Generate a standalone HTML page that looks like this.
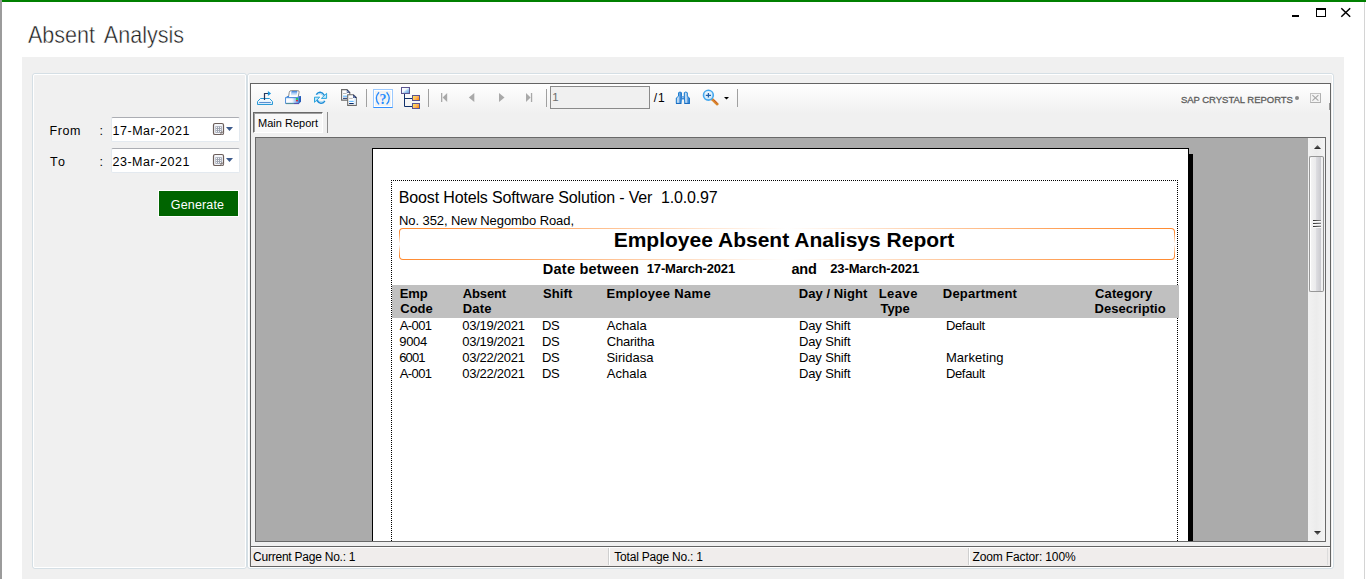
<!DOCTYPE html>
<html>
<head>
<meta charset="utf-8">
<title>Absent Analysis</title>
<style>
html,body{margin:0;padding:0;}
body{width:1366px;height:579px;overflow:hidden;background:#fff;position:relative;font-family:"Liberation Sans",sans-serif;color:#000;}
.a{position:absolute;}
.t{position:absolute;white-space:pre;line-height:1;}
/* window chrome */
#topbar{left:2px;top:0;width:1364px;height:2px;background:#008000;}
#leftbar{left:0;top:0;width:2px;height:579px;background:#9b9b9b;}
#rightline{left:1364px;top:2px;width:1px;height:577px;background:#d4d4d4;}
#title{left:28px;top:23px;font-size:24px;color:#1c1c1c;transform-origin:0 0;transform:scaleX(0.897);word-spacing:4.5px;-webkit-text-stroke:0.45px #fff;}
#main{left:22px;top:57px;width:1322px;height:522px;background:#f0f0f0;}
.gb{border:1px solid #d5dfe5;border-radius:3px;box-sizing:border-box;}
.gb:after{content:"";position:absolute;left:0;top:0;right:0;bottom:0;border:1px solid #fff;border-radius:2px;}
/* left panel */
.lbl{font-size:12.5px;color:#000;}
.inp{box-sizing:border-box;background:#fff;border:1px solid #e3e9ef;border-top-color:#abadb3;border-radius:2px;}
#gen{left:158px;top:190px;width:81px;height:27px;box-sizing:border-box;border:1px solid #fff;background:#006400;}
/* viewer */
#viewer{left:250px;top:83px;width:1081px;height:484px;box-sizing:border-box;border:1px solid #646464;background:#f0f0f0;}
#tbgrad{left:251px;top:84px;width:1079px;height:30px;background:linear-gradient(#fff,#fafafa 30%,#f0f0f0);}
.sep{width:1px;background:#a0a0a0;}
#tab{left:253px;top:112px;width:70px;height:21px;box-sizing:border-box;border:1px solid #fff;border-top-color:#696969;border-left-color:#696969;background:#f8f8f8;}
#tab:after{content:"";position:absolute;left:0;top:0;right:0;bottom:0;border-top:1px solid #a0a0a0;border-left:1px solid #a0a0a0;}
#rep{left:255px;top:137px;width:1071px;height:405px;box-sizing:border-box;border:1px solid #696969;background:#ababab;overflow:hidden;}
#page{left:116px;top:10px;width:817px;height:500px;box-sizing:border-box;border:1px solid #000;background:#fff;}
#shadow{left:933px;top:16px;width:4px;height:500px;background:#000;}
#sb{left:1308px;top:138px;width:17px;height:403px;background:linear-gradient(90deg,#f2f2f2,#ececec 50%,#f4f4f4);}
#thumb{left:1309px;top:156px;width:15px;height:136px;box-sizing:border-box;border:1px solid #979797;border-right-color:#8e8e8e;border-radius:2px;background:linear-gradient(90deg,#fff 0 1px,#f3f3f3 1px,#e9e9eb 6.5px,#dcdce0 6.5px,#c8c8cd 11.5px,#f0f0f0 11.5px);}
#status{left:251px;top:546px;width:1079px;height:20px;box-sizing:border-box;border-top:1px solid #646464;background:#f0edec;}
#status:after{content:"";position:absolute;left:0;top:0;right:0;height:1px;background:#fff;}
.st{font-size:12px;color:#000;}
#rc{left:-256px;top:-138px;width:1366px;height:579px;}
#obox{left:399px;top:228px;width:776px;height:32px;box-sizing:border-box;border:1px solid transparent;border-radius:4px;background:linear-gradient(#fff,#fff) padding-box,linear-gradient(90deg,#ff8a30,#ff9a4c 12%,#fff 50%,#ff9a4c 88%,#ff8a30) border-box;}
.oside{width:1px;height:24px;top:232px;background:linear-gradient(180deg,rgba(255,255,255,0),#fff 50%,rgba(255,255,255,0));}
/* report */
.r{font-size:12.5px;}
.h{font-size:13px;font-weight:bold;}
</style>
</head>
<body>
<div class="a" id="leftbar"></div>
<div class="a" id="topbar"></div>
<div class="a" id="rightline"></div>
<div class="t" id="title">Absent Analysis</div>

<!-- window controls -->
<div class="a" style="left:1292px;top:15px;width:7px;height:2px;background:#000;"></div>
<div class="a" style="left:1316px;top:8px;width:10px;height:9px;box-sizing:border-box;border:1px solid #000;border-top-width:2px;"></div>
<svg class="a" style="left:1340px;top:7px;" width="12" height="11" viewBox="0 0 12 11"><path d="M1.3 1.2 L10.2 9.8 M10.2 1.2 L1.3 9.8" stroke="#000" stroke-width="1.5" fill="none"/></svg>

<div class="a" id="main"></div>
<div class="a gb" style="left:32px;top:73px;width:215px;height:496px;"></div>
<div class="a gb" style="left:247px;top:73px;width:1087px;height:496px;"></div>

<!-- left panel -->
<div class="a inp" style="left:111px;top:117px;width:129px;height:25px;"></div>
<div class="a inp" style="left:111px;top:148px;width:129px;height:25px;"></div>
<div class="a" id="gen"></div>

<!-- viewer -->
<div class="a" id="viewer"></div>
<div class="a" id="tbgrad"></div>
<div class="a sep" style="left:366px;top:89px;height:18px;"></div>
<div class="a sep" style="left:428px;top:89px;height:18px;"></div>
<div class="a sep" style="left:546px;top:89px;height:18px;"></div>
<div class="a sep" style="left:737px;top:89px;height:18px;"></div>
<div class="a" style="left:550px;top:86px;width:100px;height:23px;box-sizing:border-box;border:1px solid #8a8a8a;background:#f0f0f0;"></div>

<div class="a" id="tab"></div>
<div class="a sep" style="left:327px;top:112px;height:21px;background:#8c8c8c;"></div>

<div class="a" id="rep">
  <div class="a" id="shadow"></div>
  <div class="a" id="page"></div>
  <div class="a" id="rc">
    <!-- dotted margins -->
    <div class="a" style="left:391px;top:180px;width:787px;height:1px;background:repeating-linear-gradient(90deg,#000 0 1px,transparent 1px 2px);"></div>
    <div class="a" style="left:391px;top:180px;width:1px;height:400px;background:repeating-linear-gradient(180deg,#000 0 1px,transparent 1px 2px);"></div>
    <div class="a" style="left:1177px;top:180px;width:1px;height:400px;background:repeating-linear-gradient(180deg,#000 0 1px,transparent 1px 2px);"></div>
    <!-- header band -->
    <div class="a" style="left:392px;top:285px;width:787px;height:33px;background:#c0c0c0;"></div>
    <!-- orange title box -->
    <div class="a" id="obox"></div>
    <div class="a oside" style="left:399px;"></div>
    <div class="a oside" style="left:1174px;"></div>
<div class="t" style="left:398.77px;top:190px;font-size:16px;letter-spacing:-0.146px;">Boost Hotels Software Solution - Ver  1.0.0.97</div>
<div class="t" style="left:398.98px;top:214px;font-size:13px;letter-spacing:-0.079px;">No. 352, New Negombo Road,</div>
<div class="t" style="left:613.66px;top:229px;font-size:21px;font-weight:bold;letter-spacing:0.008px;">Employee Absent Analisys Report</div>
<div class="t" style="left:542.80px;top:262px;font-size:14.5px;font-weight:bold;letter-spacing:0.242px;">Date between</div>
<div class="t" style="left:646.75px;top:262px;font-size:13px;font-weight:bold;letter-spacing:-0.163px;">17-March-2021</div>
<div class="t" style="left:791.50px;top:262px;font-size:14.5px;font-weight:bold;letter-spacing:-0.201px;">and</div>
<div class="t" style="left:830.20px;top:262px;font-size:13px;font-weight:bold;letter-spacing:-0.117px;">23-March-2021</div>
<div class="t" style="left:399.80px;top:287px;font-size:13px;font-weight:bold;letter-spacing:-0.166px;">Emp</div>
<div class="t" style="left:400.31px;top:302px;font-size:13px;font-weight:bold;letter-spacing:-0.036px;">Code</div>
<div class="t" style="left:462.66px;top:287px;font-size:13px;font-weight:bold;letter-spacing:-0.113px;">Absent</div>
<div class="t" style="left:462.80px;top:302px;font-size:13px;font-weight:bold;letter-spacing:0.167px;">Date</div>
<div class="t" style="left:543.01px;top:287px;font-size:13px;font-weight:bold;letter-spacing:0.124px;">Shift</div>
<div class="t" style="left:606.40px;top:287px;font-size:13px;font-weight:bold;letter-spacing:0.317px;">Employee Name</div>
<div class="t" style="left:798.80px;top:287px;font-size:13px;font-weight:bold;letter-spacing:0.060px;">Day / Night</div>
<div class="t" style="left:878.70px;top:287px;font-size:13px;font-weight:bold;letter-spacing:0.465px;">Leave</div>
<div class="t" style="left:880.44px;top:302px;font-size:13px;font-weight:bold;letter-spacing:-0.012px;">Type</div>
<div class="t" style="left:942.80px;top:287px;font-size:13px;font-weight:bold;letter-spacing:0.212px;">Department</div>
<div class="t" style="left:1095.11px;top:287px;font-size:13px;font-weight:bold;letter-spacing:0.099px;">Category</div>
<div class="t" style="left:1094.60px;top:302px;font-size:13px;font-weight:bold;letter-spacing:0.025px;">Desecriptio</div>
<div class="t" style="left:399.71px;top:319px;font-size:13px;letter-spacing:-0.576px;">A-001</div>
<div class="t" style="left:462.20px;top:319px;font-size:13px;letter-spacing:-0.248px;">03/19/2021</div>
<div class="t" style="left:541.88px;top:319px;font-size:13px;letter-spacing:-0.304px;">DS</div>
<div class="t" style="left:606.71px;top:319px;font-size:13px;letter-spacing:0.042px;">Achala</div>
<div class="t" style="left:798.98px;top:319px;font-size:13px;letter-spacing:-0.126px;">Day Shift</div>
<div class="t" style="left:945.88px;top:319px;font-size:13px;letter-spacing:-0.313px;">Default</div>
<div class="t" style="left:399.27px;top:335px;font-size:13px;letter-spacing:-0.321px;">9004</div>
<div class="t" style="left:462.20px;top:335px;font-size:13px;letter-spacing:-0.248px;">03/19/2021</div>
<div class="t" style="left:541.88px;top:335px;font-size:13px;letter-spacing:-0.304px;">DS</div>
<div class="t" style="left:606.78px;top:335px;font-size:13px;letter-spacing:-0.211px;">Charitha</div>
<div class="t" style="left:798.98px;top:335px;font-size:13px;letter-spacing:-0.126px;">Day Shift</div>
<div class="t" style="left:399.28px;top:351px;font-size:13px;letter-spacing:-0.871px;">6001</div>
<div class="t" style="left:462.20px;top:351px;font-size:13px;letter-spacing:-0.248px;">03/22/2021</div>
<div class="t" style="left:541.88px;top:351px;font-size:13px;letter-spacing:-0.304px;">DS</div>
<div class="t" style="left:606.40px;top:351px;font-size:13px;">Siridasa</div>
<div class="t" style="left:798.98px;top:351px;font-size:13px;letter-spacing:-0.126px;">Day Shift</div>
<div class="t" style="left:945.88px;top:351px;font-size:13px;letter-spacing:0.064px;">Marketing</div>
<div class="t" style="left:399.71px;top:367px;font-size:13px;letter-spacing:-0.576px;">A-001</div>
<div class="t" style="left:462.20px;top:367px;font-size:13px;letter-spacing:-0.248px;">03/22/2021</div>
<div class="t" style="left:541.88px;top:367px;font-size:13px;letter-spacing:-0.304px;">DS</div>
<div class="t" style="left:606.71px;top:367px;font-size:13px;letter-spacing:0.042px;">Achala</div>
<div class="t" style="left:798.98px;top:367px;font-size:13px;letter-spacing:-0.126px;">Day Shift</div>
<div class="t" style="left:945.88px;top:367px;font-size:13px;letter-spacing:-0.313px;">Default</div>
  </div>
</div>
<div class="a" id="sb"></div>
<div class="a" id="thumb"></div>

<div class="a" id="status"></div>
<div class="a" style="left:608px;top:548px;width:1px;height:17px;background:#cfcfcf;"></div>
<div class="a" style="left:609px;top:548px;width:1px;height:17px;background:#fff;"></div>
<div class="a" style="left:968px;top:548px;width:1px;height:17px;background:#cfcfcf;"></div>
<div class="a" style="left:969px;top:548px;width:1px;height:17px;background:#fff;"></div>
<div class="a" style="left:1327px;top:548px;width:1px;height:17px;background:#dcdcdc;"></div>
<!-- toolbar icons -->
<svg class="a" style="left:254px;top:87px;" width="24" height="22" viewBox="0 0 24 22">
  <defs><linearGradient id="g1" x1="0" y1="0" x2="0" y2="1"><stop offset="0" stop-color="#fff"/><stop offset="1" stop-color="#cfe8fb"/></linearGradient></defs>
  <path d="M6.5 11.5 H15.5 L18.5 14.5 V17.5 H3.5 V14.5 Z" fill="url(#g1)" stroke="#2b9ad6" stroke-width="1"/>
  <rect x="5.2" y="15" width="11.6" height="1" fill="#5b8fd0"/>
  <path d="M10.5 13 V6.5 H14.5" fill="none" stroke="#27365c" stroke-width="1.2"/>
  <path d="M13.9 3.9 L17.1 6.5 L13.9 9 Z" fill="#1e96dc"/>
</svg>
<svg class="a" style="left:282px;top:87px;" width="24" height="22" viewBox="0 0 24 22">
  <defs>
    <linearGradient id="g2" x1="0" y1="0" x2="0" y2="1"><stop offset="0" stop-color="#3d7fd9"/><stop offset="0.5" stop-color="#a9cdf5"/><stop offset="1" stop-color="#e8f2fd"/></linearGradient>
    <linearGradient id="g3" x1="0" y1="0" x2="1" y2="0"><stop offset="0" stop-color="#fff"/><stop offset="0.5" stop-color="#f4f8fe"/><stop offset="0.75" stop-color="#9dc3f0"/><stop offset="1" stop-color="#5d9ae6"/></linearGradient>
  </defs>
  <path d="M6.5 10 L7.3 5.2 Q7.6 3.6 9.2 3.6 H15.8 Q17.4 3.6 17.1 5.2 L16.2 10" fill="#fff" stroke="#8e8e8e" stroke-width="1"/>
  <path d="M9.5 4.1 H15.4 L14.7 8.4 H8.8 Z" fill="url(#g2)"/>
  <path d="M3.3 10.6 L5.6 8.9 H7 V10 H16.5 V8.9 H19 V10.6 Z" fill="#3b82d6"/>
  <path d="M16.9 10.4 L19 8.9 V14.8 L16.9 16.6 Z" fill="#2659b8"/>
  <rect x="3.6" y="10.7" width="13.2" height="5.6" fill="url(#g3)" stroke="#3b82d6" stroke-width="0.9"/>
  <rect x="14" y="11" width="2" height="1.8" fill="#22cc55"/>
  <rect x="14" y="13.1" width="2" height="1.2" fill="#dd2222"/>
  <rect x="4" y="16.2" width="8" height="0.9" fill="#4d8a8a"/>
  <rect x="12" y="16.2" width="5" height="0.9" fill="#5540a0"/>
</svg>
<svg class="a" style="left:310px;top:87px;" width="24" height="22" viewBox="0 0 24 22">
  <path d="M6.2 7.6 Q10.2 2.6 14.6 8.6" stroke="#1e8cd6" stroke-width="1.5" fill="none"/>
  <path d="M7 7.9 Q10.2 4.8 13.4 9" stroke="#8fd0f5" stroke-width="1" fill="none"/>
  <path d="M16.6 6.3 V11.4 H11.4 Z" fill="#c4e6fb" stroke="#2aa6de" stroke-width="1" stroke-linejoin="miter"/>
  <g transform="rotate(180 10.55 10.8)">
  <path d="M6.2 7.6 Q10.2 2.6 14.6 8.6" stroke="#1e8cd6" stroke-width="1.5" fill="none"/>
  <path d="M7 7.9 Q10.2 4.8 13.4 9" stroke="#8fd0f5" stroke-width="1" fill="none"/>
  <path d="M16.6 6.3 V11.4 H11.4 Z" fill="#c4e6fb" stroke="#2aa6de" stroke-width="1" stroke-linejoin="miter"/>
  </g>
</svg>
<svg class="a" style="left:337px;top:86px;" width="24" height="22" viewBox="0 0 24 22">
  <path d="M4.6 3.6 H10 L12.8 6.4 V14.1 H4.6 Z" fill="#fff" stroke="#6a6a6a" stroke-width="1.1"/>
  <path d="M9.8 3.4 L13.2 6.8 H9.8 Z" fill="#0a246a"/>
  <path d="M10.3 4.8 L11.8 6.3 H10.3 Z" fill="#fff"/>
  <rect x="6" y="7" width="3.6" height="0.9" fill="#b0b0b0"/>
  <rect x="6" y="9.6" width="4.4" height="1.2" fill="#66bbff"/>
  <rect x="6" y="11.8" width="4.4" height="1" fill="#0a2a6a"/>
  <path d="M10.7 8.7 H16.4 L19.3 11.6 V19.4 H10.7 Z" fill="#fff" stroke="#6a6a6a" stroke-width="1.1"/>
  <path d="M16.2 8.5 L19.7 12 H16.2 Z" fill="#0a246a"/>
  <path d="M16.7 9.9 L18.2 11.4 H16.7 Z" fill="#fff"/>
  <rect x="17.2" y="12.2" width="1.6" height="6.7" fill="#d9ecfb"/>
  <rect x="12.1" y="11.9" width="3.6" height="0.9" fill="#b0b0b0"/>
  <rect x="12.1" y="14.8" width="4.6" height="1.2" fill="#66bbff"/>
  <rect x="12.1" y="17" width="4.6" height="1" fill="#0a2a6a"/>
</svg>
<!-- (?) button -->
<div class="a" style="left:373px;top:89px;width:20px;height:19px;box-sizing:border-box;border:1px solid #9ccaff;border-bottom-color:#3390ff;background:#f3f3f3;box-shadow:inset 0 0 0 1px #fff;"></div>
<div class="t" style="left:379.4px;top:93px;font-family:'Liberation Serif',serif;font-weight:bold;font-size:14px;color:#2a8cff;">?</div>
<svg class="a" style="left:369px;top:86px;" width="28" height="24" viewBox="0 0 28 24"><path d="M10 6.2 Q4.6 12.3 10 18.4 M17.6 6.2 Q23 12.3 17.6 18.4" fill="none" stroke="#2a8cff" stroke-width="1.3"/></svg>
<!-- tree -->
<svg class="a" style="left:397px;top:85px;" width="28" height="26" viewBox="0 0 28 26">
  <defs>
    <linearGradient id="g4" x1="0" y1="0" x2="1" y2="1"><stop offset="0" stop-color="#fff"/><stop offset="0.45" stop-color="#f2f7fd"/><stop offset="0.55" stop-color="#b8d8f5"/><stop offset="1" stop-color="#4a92dc"/></linearGradient>
    <linearGradient id="g5" x1="0" y1="0" x2="1" y2="0.6"><stop offset="0" stop-color="#fff27a"/><stop offset="0.4" stop-color="#ffd24a"/><stop offset="0.55" stop-color="#ffb27a"/><stop offset="1" stop-color="#ff9800"/></linearGradient>
  </defs>
  <rect x="4.5" y="2.5" width="8" height="6" fill="url(#g4)" stroke="#5c5590" stroke-width="1"/>
  <path d="M7.5 9 V21.5 H15 M7.5 13.5 H15" fill="none" stroke="#0f2f6a" stroke-width="1"/>
  <rect x="15.5" y="10.5" width="7" height="5" fill="url(#g5)" stroke="#5c5590" stroke-width="1"/>
  <rect x="15.5" y="18.5" width="7" height="5" fill="url(#g5)" stroke="#5c5590" stroke-width="1"/>
</svg>
<!-- nav arrows -->
<svg class="a" style="left:436px;top:90px;" width="100" height="16" viewBox="0 0 100 16">
  <g fill="#a9a9a9">
  <rect x="5" y="3" width="1.3" height="9"/><path d="M11.2 3 V12 L6.6 7.5 Z"/>
  <path d="M38.3 3 V12 L32.8 7.5 Z"/>
  <path d="M63 3 V12 L68.5 7.5 Z"/>
  <path d="M90 3 V12 L94.6 7.5 Z"/><rect x="94.9" y="3" width="1.3" height="9"/>
  </g>
</svg>
<!-- binoculars -->
<svg class="a" style="left:671px;top:86px;" width="24" height="22" viewBox="0 0 24 22">
  <defs><linearGradient id="g6" x1="0" y1="0" x2="1" y2="0"><stop offset="0" stop-color="#2f86d6"/><stop offset="0.3" stop-color="#eaf3fc"/><stop offset="0.65" stop-color="#5a9ee0"/><stop offset="1" stop-color="#2a6ec4"/></linearGradient></defs>
  <path d="M7.5 6.7 Q9 5.3 10.5 6.7 V10.6 L10 17.4 H5.3 V12 L7.5 10.2 Z" fill="url(#g6)" stroke="#1f7fd0" stroke-width="1"/>
  <path d="M16.3 6.7 Q14.8 5.3 13.3 6.7 V10.6 L13.8 17.4 H18.5 V12 L16.3 10.2 Z" fill="url(#g6)" stroke="#1f7fd0" stroke-width="1"/>
  <rect x="10.2" y="10.4" width="3.4" height="3" fill="#2c7fd2"/>
  <rect x="11.3" y="11.2" width="1.2" height="1" fill="#e6f1fb"/>
  <rect x="5" y="17" width="5.4" height="1" fill="#1b6cc0"/><rect x="13.4" y="17" width="5.4" height="1" fill="#1b6cc0"/>
</svg>
<!-- magnifier -->
<svg class="a" style="left:699px;top:86px;" width="34" height="22" viewBox="0 0 34 22">
  <defs><radialGradient id="g7" cx="0.45" cy="0.4" r="0.6"><stop offset="0" stop-color="#fff"/><stop offset="1" stop-color="#bfe3fb"/></radialGradient></defs>
  <path d="M13.2 13.2 L18.3 18.2" stroke="#d8862a" stroke-width="2.6" stroke-linecap="round"/>
  <path d="M14.6 13.6 L18.4 17.2" stroke="#c8502a" stroke-width="0.9"/>
  <circle cx="9.4" cy="9.2" r="4.9" fill="url(#g7)" stroke="#45a8ee" stroke-width="1.6"/>
  <path d="M6.8 9.3 H12 M9.4 7 V11.6" stroke="#1f5fa8" stroke-width="1.3"/>
  <path d="M25 11 H30 L27.5 13.6 Z M25 11 H30" fill="#000"/>
</svg>
<!-- crystal close box -->
<div class="a" style="left:1310px;top:93px;width:11px;height:10px;box-sizing:border-box;border:1px solid #c2c2c2;border-right-color:#b0b0b0;border-bottom-color:#b0b0b0;background:#f4f4f4;"></div>
<svg class="a" style="left:1310px;top:93px;" width="11" height="10" viewBox="0 0 11 10"><path d="M2.4 2.2 L8.4 7.6 M8.4 2.2 L2.4 7.6" stroke="#a6a6a6" stroke-width="1.1" fill="none"/></svg>
<div class="a" style="left:1294.6px;top:96.2px;width:4px;height:4px;border-radius:50%;background:#7a7a7a;opacity:0.9;"></div>
<div class="a" style="left:1329px;top:103px;width:1px;height:7px;background:#9a9a9a;"></div>
<!-- calendar icons -->
<svg class="a" style="left:212px;top:122px;" width="24" height="15" viewBox="0 0 24 15">
  <rect x="1.5" y="1.5" width="10" height="11" rx="1.6" fill="#f4f6fa" stroke="#6b5d59" stroke-width="1.2"/>
  <rect x="3.4" y="4.2" width="6.4" height="6.6" fill="#9ea4b1"/>
  <g fill="#fff"><rect x="4" y="4.9" width="1" height="1"/><rect x="6" y="4.9" width="1" height="1"/><rect x="8" y="4.9" width="1" height="1"/>
  <rect x="4" y="6.9" width="1" height="1"/><rect x="6" y="6.9" width="1" height="1"/><rect x="8" y="6.9" width="1" height="1"/>
  <rect x="4" y="8.9" width="1" height="1"/><rect x="6" y="8.9" width="1" height="1"/><rect x="8" y="8.9" width="1" height="1"/></g>
  <path d="M9 12.8 V10.2 H11.8" fill="#eef2f8" stroke="#6b5d59" stroke-width="0.9"/>
  <path d="M14 5 H21 L17.5 9 Z" fill="#3c5a8c"/>
</svg>
<svg class="a" style="left:212px;top:153px;" width="24" height="15" viewBox="0 0 24 15">
  <rect x="1.5" y="1.5" width="10" height="11" rx="1.6" fill="#f4f6fa" stroke="#6b5d59" stroke-width="1.2"/>
  <rect x="3.4" y="4.2" width="6.4" height="6.6" fill="#9ea4b1"/>
  <g fill="#fff"><rect x="4" y="4.9" width="1" height="1"/><rect x="6" y="4.9" width="1" height="1"/><rect x="8" y="4.9" width="1" height="1"/>
  <rect x="4" y="6.9" width="1" height="1"/><rect x="6" y="6.9" width="1" height="1"/><rect x="8" y="6.9" width="1" height="1"/>
  <rect x="4" y="8.9" width="1" height="1"/><rect x="6" y="8.9" width="1" height="1"/><rect x="8" y="8.9" width="1" height="1"/></g>
  <path d="M9 12.8 V10.2 H11.8" fill="#eef2f8" stroke="#6b5d59" stroke-width="0.9"/>
  <path d="M14 5 H21 L17.5 9 Z" fill="#3c5a8c"/>
</svg>
<!-- scrollbar arrows & grip -->
<svg class="a" style="left:1308px;top:138px;" width="17" height="17" viewBox="0 0 17 17"><defs><linearGradient id="g9" x1="0" y1="0" x2="0" y2="1"><stop offset="0" stop-color="#777"/><stop offset="1" stop-color="#222"/></linearGradient></defs><path d="M6 11 L9.5 7 L13 11 Z" fill="url(#g9)"/></svg>
<svg class="a" style="left:1308px;top:524px;" width="17" height="17" viewBox="0 0 17 17"><defs><linearGradient id="g10" x1="0" y1="0" x2="0" y2="1"><stop offset="0" stop-color="#222"/><stop offset="1" stop-color="#777"/></linearGradient></defs><path d="M6 7 L9.5 11 L13 7 Z" fill="url(#g10)"/></svg>
<svg class="a" style="left:1313px;top:220px;" width="8" height="8" viewBox="0 0 8 8"><defs><linearGradient id="g8" x1="0" y1="0" x2="1" y2="0"><stop offset="0" stop-color="#2e2e2e"/><stop offset="1" stop-color="#8a8a8a"/></linearGradient></defs><g fill="url(#g8)"><rect x="0" y="0" width="8" height="1"/><rect x="0" y="3" width="8" height="1"/><rect x="0" y="6" width="8" height="1"/></g><g fill="#fafafa"><rect x="0" y="1" width="8" height="1"/><rect x="0" y="4" width="8" height="1"/><rect x="0" y="7" width="8" height="1"/></g></svg>

<div class="t" style="left:49.50px;top:125px;font-size:12.5px;letter-spacing:0.556px;">From</div>
<div class="t" style="left:99.60px;top:125px;font-size:12.5px;">:</div>
<div class="t" style="left:112.50px;top:125px;font-size:12.5px;letter-spacing:0.530px;">17-Mar-2021</div>
<div class="t" style="left:50.09px;top:156px;font-size:12.5px;letter-spacing:1.600px;">To</div>
<div class="t" style="left:99.60px;top:156px;font-size:12.5px;">:</div>
<div class="t" style="left:112.41px;top:156px;font-size:12.5px;letter-spacing:0.539px;">23-Mar-2021</div>
<div class="t" style="left:170.80px;top:199px;font-size:12.5px;color:#fff;letter-spacing:0.156px;">Generate</div>
<div class="t" style="left:258.00px;top:118px;font-size:11px;letter-spacing:0.009px;">Main Report</div>
<div class="t" style="left:552.13px;top:92px;font-size:11.5px;color:#6d6d6d;">1</div>
<div class="t" style="left:653.63px;top:92px;font-size:12px;letter-spacing:1.040px;">/1</div>
<div class="t" style="left:1180.89px;top:95px;font-size:9.5px;color:#5c5c5c;letter-spacing:-0.023px;-webkit-text-stroke:0.3px #5c5c5c;">SAP CRYSTAL REPORTS</div>
<div class="t" style="left:253.11px;top:551px;font-size:12px;letter-spacing:-0.239px;">Current Page No.: 1</div>
<div class="t" style="left:614.31px;top:551px;font-size:12px;letter-spacing:-0.207px;">Total Page No.: 1</div>
<div class="t" style="left:972.60px;top:551px;font-size:12px;letter-spacing:-0.149px;">Zoom Factor: 100%</div>
</body>
</html>
